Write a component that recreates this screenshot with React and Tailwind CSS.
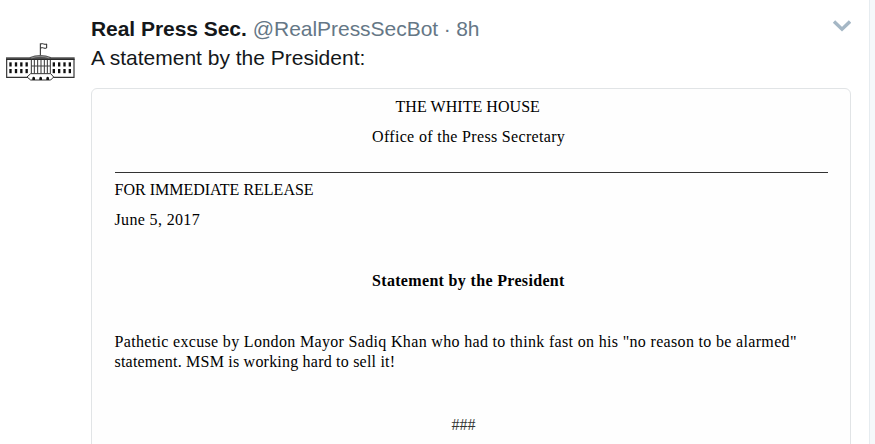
function HouseLogo() {
  const windows = [28, 44.5, 60.5, 76.5, 158, 174, 190, 206];
  return (
    <svg width="80" height="65" viewBox="0 0 240 195" fill="none" className="mt-[30px] block shrink-0">
      <path d="M121 76V40" stroke="#222" strokeWidth="3" />
      <path d="M122 42q5-2 9 0t9 0v12q-5 2-9 0t-9 0" stroke="#222" strokeWidth="3" />
      <path d="M20 90V142H84M222 90V142H158" stroke="#333" strokeWidth="3.5" />
      <path d="M18 82H88Q121 68 154 82H224V90H18Z" fill="#555" />
      <path d="M18 88H224" stroke="#222" strokeWidth="3" />
      <path d="M94 84Q121 74 148 84" stroke="#aaa" strokeWidth="2" />
      {windows.map((x) => (
        <g key={x} fill="#111">
          <rect x={x} y="97" width="7" height="12.5" />
          <rect x={x} y="117" width="7" height="12.5" />
        </g>
      ))}
      <path d="M94 90V131M103 90V131M113 90V131M123 90V131M133 90V131M142 90V131M151 90V131" stroke="#333" strokeWidth="3" />
      <path d="M94 108H151" stroke="#444" strokeWidth="3" />
      <path d="M81 141L92 131H152L161 141L152 150H92Z" fill="#fff" stroke="#333" strokeWidth="3" />
      <path d="M97 150v-7q4-5 8 0v7zM118 150v-7q4-5 8 0v7zM139 150v-7q4-5 8 0v7z" fill="#111" />
    </svg>
  );
}

function Release() {
  return (
    <article className="mt-[15px] flex h-[370px] w-[760px] shrink-0 flex-col rounded-[6px] border border-[#e1e4e6] bg-[#fefefe] pl-[22.5px] pt-2 font-['Liberation_Serif',serif] text-[16px] leading-5 text-black">
      <p className="ml-[281px] whitespace-nowrap tracking-[0.05px]">THE WHITE HOUSE</p>
      <p className="ml-[257.5px] mt-[10px] whitespace-nowrap tracking-[0.33px]">Office of the Press Secretary</p>
      <hr className="mt-[25px] h-px w-[713px] border-0 bg-[#333]" />
      <p className="mt-[7px] whitespace-nowrap">FOR IMMEDIATE RELEASE</p>
      <p className="mt-[10px] whitespace-nowrap tracking-[0.35px]">June 5, 2017</p>
      <p className="ml-[257.5px] mt-[41px] whitespace-nowrap font-bold tracking-[0.33px]">Statement by the President</p>
      <p className="mt-[41px] whitespace-nowrap tracking-[0.33px]">Pathetic excuse by London Mayor Sadiq Khan who had to think fast on his "no reason to be alarmed"</p>
      <p className="whitespace-nowrap tracking-[0.21px]">statement. MSM is working hard to sell it!</p>
      <p className="ml-[337px] mt-[43px] whitespace-nowrap text-[#333]">###</p>
    </article>
  );
}

export default function App() {
  return (
    <div className="flex h-[444px] w-[875px] overflow-hidden bg-[#f5f8fa] font-['Liberation_Sans',Arial,sans-serif]">
      <main className="flex w-[870px] shrink-0 border-r border-[#e6ecf0] bg-white">
        <HouseLogo />
        <section className="ml-[11px] flex w-[760px] flex-col pt-[14px] text-[21px] leading-[29px] text-[#14171a]">
          <header className="flex h-[29px] shrink-0 items-start whitespace-nowrap">
            <strong className="tracking-[-0.05px]">Real Press Sec.</strong>
            <span className="ml-[6px] tracking-[-0.03px] text-[#657786]">@RealPressSecBot</span>
            <span className="ml-[5.5px] text-[#657786]">·</span>
            <span className="ml-[5.5px] text-[#657786]">8h</span>
            <svg width="19" height="12" viewBox="0 0 19 12" fill="none" className="ml-auto mt-[6px]">
              <path d="M2 1.5L10 9.2L18 1.5" stroke="#a5b7c5" strokeWidth="3.4" />
            </svg>
          </header>
          <p className="h-[30px] shrink-0 whitespace-nowrap">A statement by the President:</p>
          <Release />
        </section>
      </main>
    </div>
  );
}
